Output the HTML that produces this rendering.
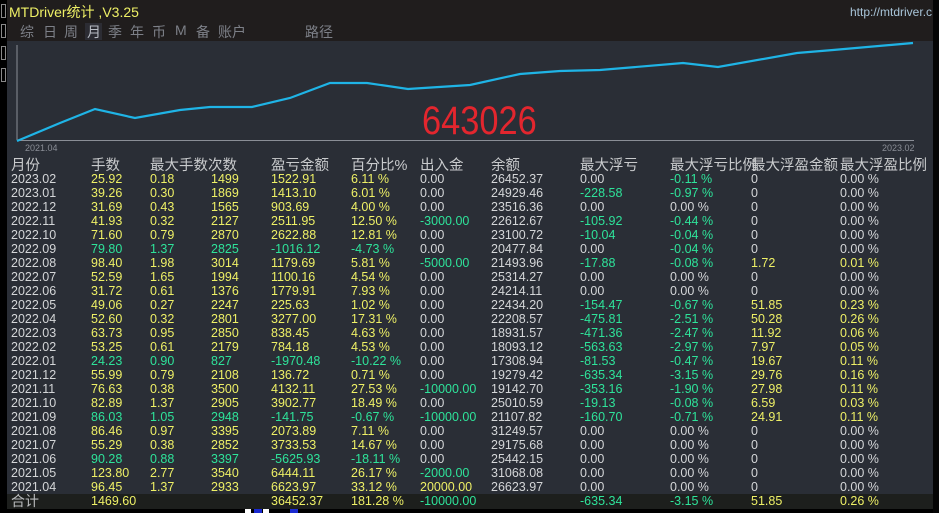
<!DOCTYPE html>
<html><head><meta charset="utf-8"><style>
*{margin:0;padding:0;box-sizing:border-box}
body{width:939px;height:513px;background:#000;position:relative;overflow:hidden;font-family:"Liberation Sans","Noto Sans CJK SC",sans-serif}
.abs{position:absolute;white-space:nowrap}
#hdr{left:7px;top:0;width:926px;height:41px;background:#201d1d}
#main{left:7px;top:41px;width:926px;height:468px;background:#2a2e36}
#tot{left:7px;top:494px;width:926px;height:15px;background:#1d1f1d}
.t{position:absolute;font-size:12.5px;line-height:14px;white-space:nowrap}
.w{color:#d4d6d8}.y{color:#eef066}.g{color:#2ee39a}
.h{position:absolute;font-size:14.5px;color:#c9cbcd;top:154px;white-space:nowrap}
.tab{position:absolute;top:22px;font-size:14px;color:#7d8088}
</style></head><body>
<div class="abs" id="hdr"></div>
<div class="abs" id="main"></div>
<div class="abs" id="tot"></div>
<div class="abs" style="left:0;top:0;width:7px;height:513px;background:#000"></div>
<div class="abs" style="left:1px;top:4px;width:5px;height:14px;border:1px solid #888"></div>
<div class="abs" style="left:1px;top:24px;width:5px;height:14px;border:1px solid #888"></div>
<div class="abs" style="left:1px;top:46px;width:5px;height:14px;border:1px solid #888"></div>
<div class="abs" style="left:1px;top:68px;width:5px;height:14px;border:1px solid #888"></div>
<div class="abs" style="left:933px;top:0;width:6px;height:513px;background:#050505"></div>
<div class="abs" style="left:245px;top:509px;width:6px;height:4px;background:#fff"></div>
<div class="abs" style="left:254px;top:509px;width:8px;height:4px;background:#1a2ad0"></div>
<div class="abs" style="left:263px;top:509px;width:6px;height:4px;background:#fff"></div>
<div class="abs" style="left:290px;top:509px;width:8px;height:4px;background:#1a2ad0"></div>
<div class="abs" style="left:9px;top:2px;font-size:14px;color:#eef066">MTDriver统计 ,V3.25</div>
<div class="abs" style="left:850px;top:5px;font-size:12px;color:#a8c4d8">http://mtdriver.c</div>
<div class="abs" style="left:85px;top:23px;width:17px;height:17px;background:#2c2c33"></div>
<div class="tab" style="left:20px">综</div>
<div class="tab" style="left:43px">日</div>
<div class="tab" style="left:64px">周</div>
<div class="tab" style="left:87px;color:#b8bcc4">月</div>
<div class="tab" style="left:108px">季</div>
<div class="tab" style="left:130px">年</div>
<div class="tab" style="left:152px">币</div>
<div class="tab" style="left:175px">M</div>
<div class="tab" style="left:196px">备</div>
<div class="tab" style="left:218px">账户</div>
<div class="tab" style="left:305px">路径</div>
<svg class="abs" style="left:0;top:0" width="939" height="160">
<line x1="17" y1="45" x2="17" y2="140" stroke="#8a8e96" stroke-width="1"/>
<line x1="17" y1="140.5" x2="914" y2="140.5" stroke="#8a8e96" stroke-width="1"/>
<polyline fill="none" stroke="#1fb4e6" stroke-width="2.2" points="17,141 60,123 95,109 135,118 180,110 210,107 252,107 290,98 330,83 367,83 408,89 470,85 520,74 560,71 600,70 683,63 718,67 797,53 833,50 913,43"/>
<text x="25" y="151" font-size="9" fill="#8a8e96" font-family="Liberation Sans">2021.04</text>
<text x="882" y="151" font-size="9" fill="#8a8e96" font-family="Liberation Sans">2023.02</text>
</svg>
<div class="abs" style="left:422px;top:99px;font-size:40px;color:#e3262e;transform:scaleX(0.86);transform-origin:left top">643026</div>
<div class="h" style="left:11px">月份</div>
<div class="h" style="left:91px">手数</div>
<div class="h" style="left:150px">最大手数次数</div>
<div class="h" style="left:271px">盈亏金额</div>
<div class="h" style="left:351px">百分比%</div>
<div class="h" style="left:420px">出入金</div>
<div class="h" style="left:491px">余额</div>
<div class="h" style="left:580px">最大浮亏</div>
<div class="h" style="left:670px">最大浮亏比例</div>
<div class="h" style="left:751px">最大浮盈金额</div>
<div class="h" style="left:840px">最大浮盈比例</div>
<div id="rows"></div>
<script>
var d=[
["2023.02","25.92","0.18","1499","1522.91","6.11 %","0.00","26452.37","0.00","-0.11 %","0","0.00 %"],
["2023.01","39.26","0.30","1869","1413.10","6.01 %","0.00","24929.46","-228.58","-0.97 %","0","0.00 %"],
["2022.12","31.69","0.43","1565","903.69","4.00 %","0.00","23516.36","0.00","0.00 %","0","0.00 %"],
["2022.11","41.93","0.32","2127","2511.95","12.50 %","-3000.00","22612.67","-105.92","-0.44 %","0","0.00 %"],
["2022.10","71.60","0.79","2870","2622.88","12.81 %","0.00","23100.72","-10.04","-0.04 %","0","0.00 %"],
["2022.09","79.80","1.37","2825","-1016.12","-4.73 %","0.00","20477.84","0.00","-0.04 %","0","0.00 %"],
["2022.08","98.40","1.98","3014","1179.69","5.81 %","-5000.00","21493.96","-17.88","-0.08 %","1.72","0.01 %"],
["2022.07","52.59","1.65","1994","1100.16","4.54 %","0.00","25314.27","0.00","0.00 %","0","0.00 %"],
["2022.06","31.72","0.61","1376","1779.91","7.93 %","0.00","24214.11","0.00","0.00 %","0","0.00 %"],
["2022.05","49.06","0.27","2247","225.63","1.02 %","0.00","22434.20","-154.47","-0.67 %","51.85","0.23 %"],
["2022.04","52.60","0.32","2801","3277.00","17.31 %","0.00","22208.57","-475.81","-2.51 %","50.28","0.26 %"],
["2022.03","63.73","0.95","2850","838.45","4.63 %","0.00","18931.57","-471.36","-2.47 %","11.92","0.06 %"],
["2022.02","53.25","0.61","2179","784.18","4.53 %","0.00","18093.12","-563.63","-2.97 %","7.97","0.05 %"],
["2022.01","24.23","0.90","827","-1970.48","-10.22 %","0.00","17308.94","-81.53","-0.47 %","19.67","0.11 %"],
["2021.12","55.99","0.79","2108","136.72","0.71 %","0.00","19279.42","-635.34","-3.15 %","29.76","0.16 %"],
["2021.11","76.63","0.38","3500","4132.11","27.53 %","-10000.00","19142.70","-353.16","-1.90 %","27.98","0.11 %"],
["2021.10","82.89","1.37","2905","3902.77","18.49 %","0.00","25010.59","-19.13","-0.08 %","6.59","0.03 %"],
["2021.09","86.03","1.05","2948","-141.75","-0.67 %","-10000.00","21107.82","-160.70","-0.71 %","24.91","0.11 %"],
["2021.08","86.46","0.97","3395","2073.89","7.11 %","0.00","31249.57","0.00","0.00 %","0","0.00 %"],
["2021.07","55.29","0.38","2852","3733.53","14.67 %","0.00","29175.68","0.00","0.00 %","0","0.00 %"],
["2021.06","90.28","0.88","3397","-5625.93","-18.11 %","0.00","25442.15","0.00","0.00 %","0","0.00 %"],
["2021.05","123.80","2.77","3540","6444.11","26.17 %","-2000.00","31068.08","0.00","0.00 %","0","0.00 %"],
["2021.04","96.45","1.37","2933","6623.97","33.12 %","20000.00","26623.97","0.00","0.00 %","0","0.00 %"]];
var xs=[11,91,150,211,271,351,420,491,580,670,751,840];
var h="";
function cls(i,v,neg){
 if(i==0||i==7)return "w";
 if(i>=1&&i<=5)return neg?"g":"y";
 if(v.charAt(0)=="-")return "g";
 if(v=="0.00"||v=="0"||v=="0.00 %")return "w";
 return "y";
}
d.forEach(function(r,k){
 var neg=r[4].charAt(0)=="-";var top=172+14*k;
 r.forEach(function(v,i){h+='<div class="t '+cls(i,v,neg)+'" style="left:'+xs[i]+'px;top:'+top+'px">'+v+'</div>';});
});
var t=["合计","1469.60","","","36452.37","181.28 %","-10000.00","","-635.34","-3.15 %","51.85","0.26 %"];
t.forEach(function(v,i){if(!v)return;var c=i==0?"w":(v.charAt(0)=="-"?"g":"y");
 h+='<div class="t '+c+'" style="left:'+xs[i]+'px;top:494px;'+(i==0?'font-size:14px;color:#b8babc':'')+'">'+v+'</div>';});
document.getElementById("rows").innerHTML=h;
</script>
</body></html>
